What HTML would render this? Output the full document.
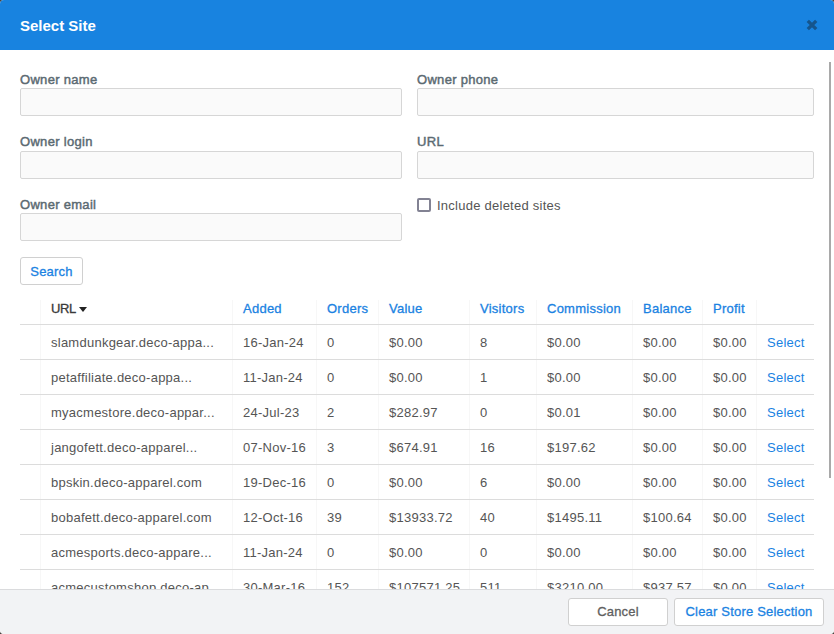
<!DOCTYPE html>
<html><head><meta charset="utf-8">
<style>
*{box-sizing:border-box;margin:0;padding:0}
html,body{width:834px;height:634px;overflow:hidden;background:#47433f;font-family:"Liberation Sans",sans-serif}
.modal{position:absolute;left:0;top:0;width:834px;height:634px;background:#fff;border-radius:4px;overflow:hidden}
.hdr{position:absolute;left:0;top:0;width:834px;height:50px;background:#1883e0}
.title{position:absolute;left:20px;top:17px;font-size:15px;font-weight:bold;color:#fff;line-height:18px}
.close{position:absolute;left:806px;top:19px;width:12px;height:12px}
.lbl{position:absolute;font-size:13px;color:#5b6a72;line-height:16px;letter-spacing:0.3px;-webkit-text-stroke:0.45px #5b6a72}
.inp{position:absolute;height:28px;background:#fafafa;border:1px solid #d6d6d6;border-radius:2px}
.cb{position:absolute;left:417px;top:198px;width:14px;height:14px;border:2px solid #828293;border-radius:2px}
.cbl{position:absolute;left:437px;top:198px;font-size:13px;color:#555;line-height:16px;letter-spacing:0.25px}
.btn{position:absolute;background:#fff;border:1px solid #d0d0d0;border-radius:3px;font-size:13px;line-height:27px;text-align:center;letter-spacing:0.2px;-webkit-text-stroke:0.3px currentColor}
.scroll{position:absolute;left:829px;top:62px;width:2px;height:416px;background:#a9a9a9}
table{position:absolute;left:20px;top:295px;width:794px;border-collapse:collapse;table-layout:fixed}
td,th{font-size:13px;letter-spacing:0.25px;text-align:left;font-weight:normal;padding:0 0 0 11px;white-space:nowrap;overflow:hidden;color:#555}
th{height:29px;color:#1a82e2;vertical-align:bottom;padding-bottom:8px;-webkit-text-stroke:0.3px currentColor}
td{height:35px;border-top:1px solid #dcdcdc;padding-top:2px}
tr.h th{border-bottom:1px solid #dcdcdc}
td:nth-child(2),th:nth-child(2){padding-left:10px}
.vl{position:absolute;top:300px;width:1px;height:300px;background:#f7f7f7}
.ftr{position:absolute;left:0;top:589px;width:834px;height:45px;background:#f2f3f5;border-top:1px solid #dadbdd}
a{color:#1a82e2;text-decoration:none}
</style></head><body>
<div class="modal">
  <div class="hdr">
    <div class="title">Select Site</div>
    <svg class="close" viewBox="0 0 12 12"><path d="M1.8 1.8 L10.2 10.2 M10.2 1.8 L1.8 10.2" stroke="#15558d" stroke-width="3.3" stroke-linecap="butt"/></svg>
  </div>

  <div class="lbl" style="left:20px;top:72px">Owner name</div>
  <div class="inp" style="left:20px;top:88px;width:382px"></div>
  <div class="lbl" style="left:417px;top:72px">Owner phone</div>
  <div class="inp" style="left:417px;top:88px;width:397px"></div>

  <div class="lbl" style="left:20px;top:134px">Owner login</div>
  <div class="inp" style="left:20px;top:151px;width:382px"></div>
  <div class="lbl" style="left:417px;top:134px">URL</div>
  <div class="inp" style="left:417px;top:151px;width:397px"></div>

  <div class="lbl" style="left:20px;top:197px">Owner email</div>
  <div class="inp" style="left:20px;top:213px;width:382px"></div>
  <div class="cb"></div>
  <div class="cbl">Include deleted sites</div>

  <div class="btn" style="left:20px;top:257px;width:63px;height:28px;color:#1a82e2">Search</div>

  <div class="scroll"></div>

  <div class="vl" style="left:40px"></div>
  <div class="vl" style="left:232px"></div>
  <div class="vl" style="left:316px"></div>
  <div class="vl" style="left:378px"></div>
  <div class="vl" style="left:469px"></div>
  <div class="vl" style="left:536px"></div>
  <div class="vl" style="left:632px"></div>
  <div class="vl" style="left:702px"></div>
  <div class="vl" style="left:756px"></div>

  <table>
    <colgroup><col style="width:21px"><col style="width:191px"><col style="width:84px"><col style="width:62px"><col style="width:91px"><col style="width:67px"><col style="width:96px"><col style="width:70px"><col style="width:54px"><col style="width:58px"></colgroup>
    <tr class="h"><th></th><th style="color:#3a3a3a"><span style="letter-spacing:-0.4px">URL</span><svg width="8" height="5" viewBox="0 0 8 5" style="vertical-align:1px;margin-left:3px"><path d="M0 0H8L4 5Z" fill="#222"/></svg></th><th>Added</th><th>Orders</th><th>Value</th><th>Visitors</th><th>Commission</th><th>Balance</th><th>Profit</th><th></th></tr>
    <tr><td></td><td>slamdunkgear.deco-appa...</td><td>16-Jan-24</td><td>0</td><td>$0.00</td><td>8</td><td>$0.00</td><td>$0.00</td><td>$0.00</td><td><a>Select</a></td></tr>
    <tr><td></td><td>petaffiliate.deco-appa...</td><td>11-Jan-24</td><td>0</td><td>$0.00</td><td>1</td><td>$0.00</td><td>$0.00</td><td>$0.00</td><td><a>Select</a></td></tr>
    <tr><td></td><td>myacmestore.deco-appar...</td><td>24-Jul-23</td><td>2</td><td>$282.97</td><td>0</td><td>$0.01</td><td>$0.00</td><td>$0.00</td><td><a>Select</a></td></tr>
    <tr><td></td><td>jangofett.deco-apparel...</td><td>07-Nov-16</td><td>3</td><td>$674.91</td><td>16</td><td>$197.62</td><td>$0.00</td><td>$0.00</td><td><a>Select</a></td></tr>
    <tr><td></td><td>bpskin.deco-apparel.com</td><td>19-Dec-16</td><td>0</td><td>$0.00</td><td>6</td><td>$0.00</td><td>$0.00</td><td>$0.00</td><td><a>Select</a></td></tr>
    <tr><td></td><td>bobafett.deco-apparel.com</td><td>12-Oct-16</td><td>39</td><td>$13933.72</td><td>40</td><td>$1495.11</td><td>$100.64</td><td>$0.00</td><td><a>Select</a></td></tr>
    <tr><td></td><td>acmesports.deco-appare...</td><td>11-Jan-24</td><td>0</td><td>$0.00</td><td>0</td><td>$0.00</td><td>$0.00</td><td>$0.00</td><td><a>Select</a></td></tr>
    <tr><td></td><td>acmecustomshop.deco-ap...</td><td>30-Mar-16</td><td>152</td><td>$107571.25</td><td>511</td><td>$3210.00</td><td>$937.57</td><td>$0.00</td><td><a>Select</a></td></tr>
  </table>

  <div class="ftr">
    <div class="btn" style="left:568px;top:8px;width:100px;height:28px;color:#606060;line-height:26px">Cancel</div>
    <div class="btn" style="left:674px;top:8px;width:150px;height:28px;color:#1a82e2;line-height:26px">Clear Store Selection</div>
  </div>
</div>
</body></html>
